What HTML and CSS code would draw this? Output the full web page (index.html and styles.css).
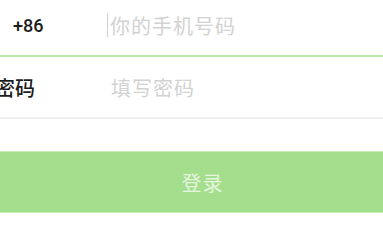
FILE: index.html
```html
<!DOCTYPE html>
<html lang="zh">
<head>
<meta charset="utf-8">
<link rel="stylesheet" href="styles.css">
</head>
<body>
<div class="form">
  <div class="row row-phone">
    <div class="label label-code">+86</div>
    <div class="field"><span class="cursor"></span><span class="placeholder">你的手机号码</span></div>
  </div>
  <div class="row row-pass">
    <div class="label label-pass">密码</div>
    <div class="field field-pass"><span class="placeholder">填写密码</span></div>
  </div>
  <div class="spacer"></div>
  <div class="btn"><span class="btn-text">登录</span></div>
</div>
</body>
</html>
```
FILE: styles.css
```css
html, body {
  margin: 0;
  padding: 0;
  background: #fff;
}
body {
  font-family: "Noto Sans CJK SC", "Noto Sans", sans-serif;
  overflow: hidden;
}
.form {
  display: flex;
  flex-direction: column;
}
.row {
  display: flex;
  align-items: center;
}
.row-phone {
  height: 57px;
  border-bottom: 2px solid #b8e7a6;
  padding-bottom: 5px;
  box-sizing: border-box;
}
.row-pass {
  height: 60px;
  border-bottom: 2px solid #efefef;
}
.label {
  width: 107px;
  flex: none;
  color: #1c1c1c;
  box-sizing: border-box;
}
.label-code {
  font-family: Roboto, "Liberation Sans", sans-serif;
  font-weight: 500;
  font-size: 18px;
  padding-left: 13px;
}
.label-pass {
  font-size: 20px;
  font-weight: 500;
  margin-left: -5px;
  width: 114px;
}
.field {
  display: flex;
  align-items: center;
  height: 100%;
}
.field-pass {
  padding-left: 2px;
}
.cursor {
  width: 1px;
  height: 24px;
  background: #cfcfcf;
  margin-right: 2px;
}
.placeholder {
  font-size: 20px;
  letter-spacing: 1px;
  color: #d2d2d2;
}
.spacer {
  height: 32px;
}
.btn {
  height: 62px;
  background: #a4de8c;
  border-top: 1px solid #c4ecb4;
  border-bottom: 1px solid #c4ecb4;
  box-sizing: border-box;
  display: flex;
  align-items: center;
  justify-content: center;
  padding-left: 22px;
}
.btn-text {
  font-size: 20px;
  letter-spacing: 1px;
  color: rgba(255, 255, 255, 0.72);
}
```
